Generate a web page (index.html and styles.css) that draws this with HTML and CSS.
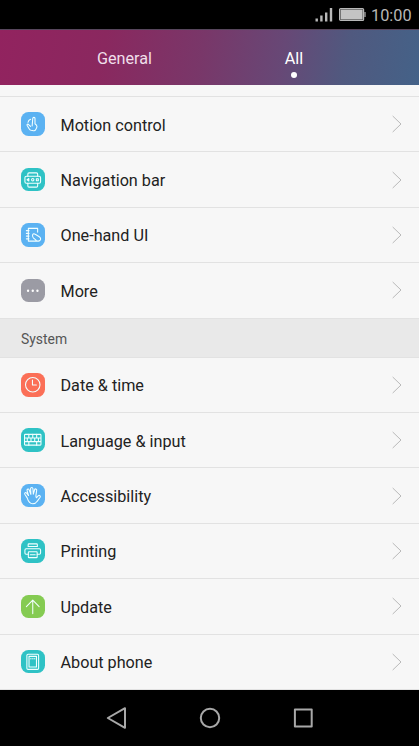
FILE: index.html
```html
<!DOCTYPE html>
<html lang="en">
<head>
<meta charset="utf-8">
<title>Settings</title>
<link rel="stylesheet" href="styles.css">
</head>
<body>
<div class="phone">
  <div class="status">
    <svg class="signal" width="18" height="15" viewBox="0 0 18 15"><path d="M1.7 14.5v-3M6.4 14.5v-6M11.2 14.5v-9M16 14.5V1"/></svg>
    <svg class="battery" width="27" height="13" viewBox="0 0 27 13"><rect x=".6" y=".6" width="24" height="11.8" rx="1"/><rect class="charge" x="1.5" y="1.5" width="22.2" height="10"/><path d="M26 4v5"/></svg>
    <span>10:00</span>
  </div>
  <header class="tabs">
    <div class="tab general">General</div>
    <div class="tab all active">All</div>
  </header>
  <main>
    <div class="previous"></div>
    <section class="list">
      <div class="row"><svg class="icon blue" viewBox="0 0 24 24"><path d="M11.4 14.2 12 6.6c.2-1.5 2.3-1.4 2.3.1v5.4l1.4 1.2c.8.8.8 1.7.3 2.7l-1 2c-.5.9-1.2 1.3-2.2 1.1l-2.5-.4c-1-.2-1.5-.7-2-1.6l-2-3.3c-.6-1.1.8-1.8 1.5-1l2 2M9.8 7.5c-1.4.6-2.3 1.5-2.7 3"/></svg><span class="label">Motion control</span><svg class="chevron" viewBox="0 0 10 18"><path d="M.7 1 9 9 .7 17"/></svg></div>
      <div class="row"><svg class="icon teal" viewBox="0 0 24 24"><path d="M7 8.5V6.2Q7 5 8.2 5h7.6Q17 5 17 6.2v2.3M7 15.5v2.8q0 1.2 1.2 1.2h7.6q1.2 0 1.2-1.2v-2.8"/><rect x="4" y="8.5" width="16" height="7" rx="1.5"/><path d="m8 10.7-1.8 1.3L8 13.3z"/><circle cx="12" cy="12" r="1.2"/><rect x="15.7" y="11" width="2" height="2"/></svg><span class="label">Navigation bar</span><svg class="chevron" viewBox="0 0 10 18"><path d="M.7 1 9 9 .7 17"/></svg></div>
      <div class="row"><svg class="icon blue" viewBox="0 0 24 24"><path d="M17 9.3V5.5H7.5v13H17M5.5 7.8h2.7M5.5 10.6h2.7M5.5 13.4h2.7M5.5 16.2h2.7M12 11.8c.5-1 1.7-.9 2.5-.3l3.8 2.2c1.7 1 2.2 2.6 1.3 3.8-1 1.2-2.8 1.1-4 .2l-3-2.6c-.8-.8-1.1-2.3-.6-3.3z"/></svg><span class="label">One-hand UI</span><svg class="chevron" viewBox="0 0 10 18"><path d="M.7 1 9 9 .7 17"/></svg></div>
      <div class="row"><svg class="icon gray" viewBox="0 0 24 24"><g class="dots"><circle cx="7.2" cy="12" r="1.2"/><circle cx="12" cy="12" r="1.2"/><circle cx="16.8" cy="12" r="1.2"/></g></svg><span class="label">More</span><svg class="chevron" viewBox="0 0 10 18"><path d="M.7 1 9 9 .7 17"/></svg></div>
    </section>
    <h2>System</h2>
    <section class="list">
      <div class="row"><svg class="icon red" viewBox="0 0 24 24"><circle cx="12" cy="12" r="7.4"/><path d="M11.7 7.2v5h4"/></svg><span class="label">Date &amp; time</span><svg class="chevron" viewBox="0 0 10 18"><path d="M.7 1 9 9 .7 17"/></svg></div>
      <div class="row"><svg class="icon teal" viewBox="0 0 24 24"><rect x="3.6" y="6.5" width="16.8" height="11" rx=".8"/><path d="M4 10.2h16M4 13.9h16M8 6.5v3.7M12 6.5v3.7M16 6.5v3.7M6.4 10.2v3.7M10.2 10.2v3.7M14 10.2v3.7M17.8 10.2v3.7M8 13.9v3.6M16 13.9v3.6"/></svg><span class="label">Language &amp; input</span><svg class="chevron" viewBox="0 0 10 18"><path d="M.7 1 9 9 .7 17"/></svg></div>
      <div class="row"><svg class="icon blue" viewBox="0 0 24 24"><path d="m6.3 14.2-2.4-3.8c-.7-1.4 1-2.3 1.9-1l1.9 2.4-1.5-5.1c-.4-1.6 1.7-2.1 2.2-.6l1.7 4.5-.3-5.7c0-1.7 2.3-1.7 2.4 0l.4 5.4 1.3-4.4c.4-1.5 2.5-1 2.1.6l-.8 5.8.5 1.8 1.8-1.9c1.2-1.2 2.8-.1 2 1.3l-3 4.2c-1 1.7-2.5 2.5-4.5 2.5-2.8 0-4.5-2-5.7-6z"/></svg><span class="label">Accessibility</span><svg class="chevron" viewBox="0 0 10 18"><path d="M.7 1 9 9 .7 17"/></svg></div>
      <div class="row"><svg class="icon teal" viewBox="0 0 24 24"><path d="M7.3 7.7V5.8Q7.3 5 8.1 5h7.8q.8 0 .8.8v1.9zM7.5 15.5H5.2q-1.2 0-1.2-1.2v-2.9Q4 10 5.3 10h13.4q1.3 0 1.3 1.4v2.9q0 1.2-1.2 1.2h-2.3"/><rect x="7.5" y="13" width="9" height="6" rx=".7"/><path d="M9.5 16h5"/></svg><span class="label">Printing</span><svg class="chevron" viewBox="0 0 10 18"><path d="M.7 1 9 9 .7 17"/></svg></div>
      <div class="row"><svg class="icon green" viewBox="0 0 24 24"><path d="M12 19V5.4M5.5 11.8 12 5.3l6.5 6.5"/></svg><span class="label">Update</span><svg class="chevron" viewBox="0 0 10 18"><path d="M.7 1 9 9 .7 17"/></svg></div>
      <div class="row"><svg class="icon teal" viewBox="0 0 24 24"><rect x="6" y="4.3" width="12" height="15.5" rx="1.2"/><rect x="8.2" y="6.5" width="7.6" height="10.8"/><path d="M9.8 9h.6M11.8 9h.6M13.7 9h.5"/></svg><span class="label">About phone</span><svg class="chevron" viewBox="0 0 10 18"><path d="M.7 1 9 9 .7 17"/></svg></div>
    </section>
  </main>
  <nav>
    <svg width="22" height="24" viewBox="0 0 22 24"><path d="M19 2.2v19.6L1.8 12z"/></svg>
    <svg width="22" height="24" viewBox="0 0 22 24"><circle cx="11" cy="12" r="9.2"/></svg>
    <svg width="22" height="24" viewBox="0 0 22 24"><rect x="2.9" y="3.6" width="16.8" height="16.8"/></svg>
  </nav>
</div>
</body>
</html>
```

FILE: styles.css
```css
* { box-sizing: border-box; }
body { margin: 0; background: #000; font-family: Roboto, sans-serif; }
.phone { width: 419px; height: 746px; overflow: hidden; display: flex; flex-direction: column; }
svg { display: block; flex: none; fill: none; }
.status { height: 29px; flex: none; display: flex; align-items: center; justify-content: flex-end; padding-right: 7px; color: #b8b8b8; font-size: 16.3px; line-height: 29px; }
.status span { width: 41px; padding-top: 2px; }
.signal { stroke: #b8b8b8; stroke-width: 2.4; margin-right: 6px; }
.battery { stroke: #b8b8b8; stroke-width: 1.2; margin-right: 5px; }
.battery .charge { fill: #c4c4c4; stroke: none; }
.tabs { height: 56px; flex: none; display: flex; background: linear-gradient(100deg, #92235f 0%, #8a285f 25%, #793769 48%, #674876 67%, #50597f 82%, #446288 100%); border-top: 1px solid #57465c; padding-left: 40px; }
.tab { width: 169px; text-align: center; color: #f0dfea; font-size: 16.2px; line-height: 57px; }
.tab.active { width: 170px; color: #fff; display: flex; flex-direction: column; align-items: center; }
.active::after { content: ""; width: 6px; height: 6px; border-radius: 50%; background: #fff; margin-top: -15.5px; }
main { flex: none; height: 605px; background: #f7f7f7; border-bottom: 1px solid #ddd; }
.previous { height: 12px; border-bottom: 1px solid #e2e2e2; }
.row { height: 55.4px; display: flex; align-items: center; padding: 0 17px 0 21px; border-bottom: 1px solid #e2e2e2; }
.label { flex: 1; margin-left: 16px; color: #222; font-size: 16.2px; line-height: 20px; padding-top: 2.8px; }
.icon { width: 23.5px; height: 23.5px; border-radius: 7.5px; stroke: #f2ffff; stroke-width: 1.1; stroke-linecap: round; stroke-linejoin: round; }
.blue { background: #5bb2f2; }
.teal { background: #2fc2c5; }
.gray { background: #9b9ba4; }
.red { background: #fb6f57; }
.green { background: #85cb52; }
.dots { fill: #fff; stroke: none; }
.chevron { width: 10px; height: 18px; stroke: #b9b9b9; stroke-width: 1; }
h2 { margin: 0; height: 39px; background: #e9e9e9; border-bottom: 1px solid #e2e2e2; padding-left: 21px; color: #555; font-size: 13.9px; font-weight: 400; line-height: 40px; }
nav { height: 56px; display: flex; justify-content: center; gap: 71px; align-items: center; stroke: #a8a8a8; stroke-width: 2; stroke-linejoin: round; }
```
